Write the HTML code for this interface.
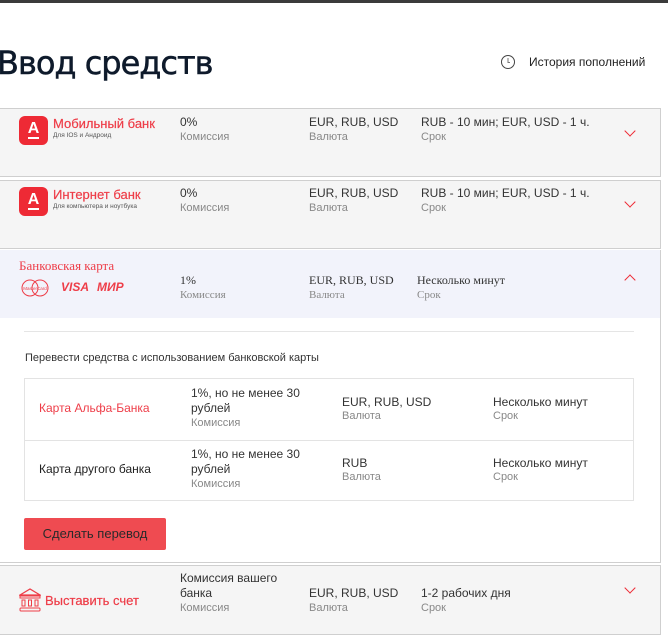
<!DOCTYPE html>
<html><head><meta charset="utf-8"><style>
*{margin:0;padding:0;box-sizing:border-box}
body{width:668px;height:639px;overflow:hidden;background:#fff;font-family:"Liberation Sans",sans-serif;position:relative;color:#333}
.a{position:absolute}
.topbar{left:0;top:0;width:668px;height:3px;background:#3b3b3b}
h1{position:absolute;left:-3px;top:44px;font-size:32px;font-weight:normal;color:#0e1a2b;font-family:"DejaVu Sans",sans-serif;letter-spacing:-1px;-webkit-text-stroke:0.5px #0e1a2b}
.row{position:absolute;left:0;width:661px;border:1px solid #cfcfcf;border-left:none;background:#f5f5f5}
.v{font-size:12px;color:#333}
.l{font-size:11px;color:#888}
.logo{width:29px;height:29px;border-radius:6px;background:#ee2a35;color:#fff;font-weight:bold;font-size:16px;text-align:center;line-height:26px}
.logo span{display:inline-block;border-bottom:2px solid #fff;line-height:16px}
.t{color:#ee3d48;font-size:13px;-webkit-text-stroke:0.2px #ee3d48}
.s{font-size:6.5px;color:#555}
.chev{width:8px;height:8px;border-right:1.5px solid #ee2a35;border-bottom:1.5px solid #ee2a35;transform:rotate(45deg)}
.serif{font-family:"Liberation Serif",serif}
</style></head><body>
<div class="a topbar"></div>
<h1>Ввод средств</h1>
<svg class="a" style="left:500px;top:54px" width="16" height="16" viewBox="0 0 16 16"><circle cx="8" cy="8" r="6.5" fill="none" stroke="#444" stroke-width="1"/><path d="M8 4v4.5h2" fill="none" stroke="#777" stroke-width="1"/></svg>
<div class="a" style="left:529px;top:55px;font-size:12px;color:#222">История пополнений</div>

<div class="row" style="top:108px;height:69px"></div>
<div class="a logo" style="left:19px;top:116px"><span>A</span></div>
<div class="a t" style="left:53px;top:116px">Мобильный банк</div>
<div class="a s" style="left:53px;top:132px">Для IOS и Андроид</div>
<div class="a v" style="left:180px;top:115px">0%</div><div class="a l" style="left:180px;top:131px">Комиссия</div>
<div class="a v" style="left:309px;top:115px">EUR, RUB, USD</div><div class="a l" style="left:309px;top:131px">Валюта</div>
<div class="a v" style="left:421px;top:115px">RUB - 10 мин; EUR, USD - 1 ч.</div><div class="a l" style="left:421px;top:131px">Срок</div>
<div class="a chev" style="left:626px;top:127px"></div>

<div class="row" style="top:180px;height:69px"></div>
<div class="a logo" style="left:19px;top:187px"><span>A</span></div>
<div class="a t" style="left:53px;top:187px">Интернет банк</div>
<div class="a s" style="left:53px;top:203px">Для компьютера и ноутбука</div>
<div class="a v" style="left:180px;top:186px">0%</div><div class="a l" style="left:180px;top:202px">Комиссия</div>
<div class="a v" style="left:309px;top:186px">EUR, RUB, USD</div><div class="a l" style="left:309px;top:202px">Валюта</div>
<div class="a v" style="left:421px;top:186px">RUB - 10 мин; EUR, USD - 1 ч.</div><div class="a l" style="left:421px;top:202px">Срок</div>
<div class="a chev" style="left:626px;top:198px"></div>

<div class="a" style="left:0;top:250px;width:661px;height:313px;border-right:1px solid #cfcfcf;border-bottom:1px solid #cfcfcf"></div>
<div class="a" style="left:0;top:250px;width:660px;height:68px;background:#f2f3fb"></div>
<div class="a serif" style="left:19px;top:258px;font-size:13px;color:#ee3d48">Банковская карта</div>
<svg class="a" style="left:19px;top:279px" width="32" height="18" viewBox="0 0 32 18"><circle cx="11" cy="9" r="8" fill="none" stroke="#ee3d48"/><circle cx="21" cy="9" r="8" fill="none" stroke="#ee3d48"/><text x="16" y="11" font-size="4.5" text-anchor="middle" fill="#ee3d48" font-family="Liberation Sans">MasterCard</text></svg>
<div class="a" style="left:61px;top:280px;font-size:12px;font-weight:bold;font-style:italic;color:#ee3d48">VISA</div>
<div class="a" style="left:97px;top:280px;font-size:12px;font-weight:bold;font-style:italic;color:#ee3d48">МИР</div>
<div class="a v serif" style="left:180px;top:273px">1%</div><div class="a l serif" style="left:180px;top:289px">Комиссия</div>
<div class="a v serif" style="left:309px;top:273px">EUR, RUB, USD</div><div class="a l serif" style="left:309px;top:289px">Валюта</div>
<div class="a v serif" style="left:417px;top:273px">Несколько минут</div><div class="a l serif" style="left:417px;top:289px">Срок</div>
<div class="a chev" style="left:626px;top:276px;transform:rotate(-135deg)"></div>

<div class="a" style="left:24px;top:331px;width:610px;height:1px;background:#e5e5e5"></div>
<div class="a" style="left:25px;top:352px;font-size:11px;color:#333">Перевести средства с использованием банковской карты</div>
<div class="a" style="left:24px;top:378px;width:610px;height:123px;border:1px solid #e3e3e3"></div>
<div class="a" style="left:24px;top:440px;width:610px;height:1px;background:#e3e3e3"></div>
<div class="a" style="left:39px;top:401px;font-size:12px;color:#ee3d48">Карта Альфа-Банка</div>
<div class="a v" style="left:191px;top:386px;line-height:15px">1%, но не менее 30<br>рублей</div><div class="a l" style="left:191px;top:417px">Комиссия</div>
<div class="a v" style="left:342px;top:395px">EUR, RUB, USD</div><div class="a l" style="left:342px;top:410px">Валюта</div>
<div class="a v" style="left:493px;top:395px">Несколько минут</div><div class="a l" style="left:493px;top:410px">Срок</div>
<div class="a" style="left:39px;top:462px;font-size:12px;color:#222">Карта другого банка</div>
<div class="a v" style="left:191px;top:447px;line-height:15px">1%, но не менее 30<br>рублей</div><div class="a l" style="left:191px;top:478px">Комиссия</div>
<div class="a v" style="left:342px;top:456px">RUB</div><div class="a l" style="left:342px;top:471px">Валюта</div>
<div class="a v" style="left:493px;top:456px">Несколько минут</div><div class="a l" style="left:493px;top:471px">Срок</div>
<div class="a" style="left:24px;top:518px;width:142px;height:32px;background:#ef4b51;border-radius:2px;color:#2a2a2a;font-size:13px;text-align:center;line-height:32px">Сделать перевод</div>

<div class="row" style="top:565px;height:70px"></div>
<svg class="a" style="left:19px;top:587px" width="22" height="26" viewBox="0 0 22 26"><path d="M1 8L11 2L21 8Z" fill="none" stroke="#ee3d48" stroke-width="1.3"/><rect x="1" y="9" width="20" height="2" fill="none" stroke="#ee3d48"/><rect x="3" y="13" width="3" height="6" fill="none" stroke="#ee3d48"/><rect x="9.5" y="13" width="3" height="6" fill="none" stroke="#ee3d48"/><rect x="16" y="13" width="3" height="6" fill="none" stroke="#ee3d48"/><rect x="1" y="21" width="20" height="3" rx="1" fill="none" stroke="#ee3d48"/></svg>
<div class="a t" style="left:45px;top:593px">Выставить счет</div>
<div class="a v" style="left:180px;top:571px;line-height:15px">Комиссия вашего<br>банка</div><div class="a l" style="left:180px;top:602px">Комиссия</div>
<div class="a v" style="left:309px;top:586px">EUR, RUB, USD</div><div class="a l" style="left:309px;top:602px">Валюта</div>
<div class="a v" style="left:421px;top:586px">1-2 рабочих дня</div><div class="a l" style="left:421px;top:602px">Срок</div>
<div class="a chev" style="left:626px;top:584px"></div>
</body></html>
